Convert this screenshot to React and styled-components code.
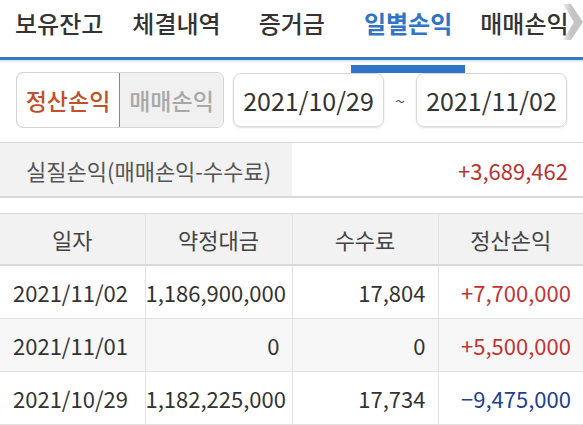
import styled, { createGlobalStyle } from 'styled-components'

const GlobalStyle = createGlobalStyle`
  html, body { margin: 0; padding: 0; background: #fff; }
  body { font-family: "Noto Sans CJK KR", "Noto Sans", sans-serif; color: #333; }
`;

const Page = styled.div`
  width: 583px;
  height: 425px;
  overflow: hidden;
  background: #fff;
`;

const Tabs = styled.div`
  position: relative;
  display: flex;
  height: 57px;
  border-bottom: 3px solid #3a76c0;
  box-shadow: 0 2px 0 #d9eefb;
  padding-left: 15px;
  white-space: nowrap;
`;

const Tab = styled.div`
  position: relative;
  flex: none;
  margin-right: ${p => p.gap}px;
  padding-top: 2px;
  font-size: 24px;
  line-height: 42px;
  font-weight: ${p => (p.active ? 700 : 500)};
  color: ${p => (p.active ? '#2f74c6' : '#333')};
  &::after {
    content: '';
    display: ${p => (p.active ? 'block' : 'none')};
    position: absolute;
    left: -13px;
    right: -13px;
    bottom: -16px;
    height: 8px;
    background: #2f74c6;
  }
`;

const Chevron = styled.svg`
  position: absolute;
  right: 0;
  top: 4px;
`;

const Controls = styled.div`
  display: flex;
  align-items: center;
  padding: 12px 0 0 16px;
  height: 56px;
`;

const Toggle = styled.div`
  display: flex;
  height: 54px;
  border: 1px solid #d4d4d4;
  border-radius: 7px;
  overflow: hidden;
`;

const ToggleItem = styled.div`
  width: ${p => p.w}px;
  display: flex;
  align-items: center;
  justify-content: center;
  font-size: 23px;
  font-weight: 500;
  background: ${p => (p.active ? '#fff' : '#f0f0f0')};
  color: ${p => (p.active ? '#c0522a' : '#a8a8a8')};
  border: ${p => (p.active ? '1px solid #c8704a' : 'none')};
  border-radius: ${p => (p.active ? '7px 0 0 7px' : '0')};
  margin: ${p => (p.active ? '-1px 0 -1px -1px' : '0')};
`;

const DateBox = styled.div`
  width: 149px;
  height: 52px;
  margin-left: ${p => p.ml}px;
  border: 1px solid #d8d8d8;
  border-radius: 8px;
  box-shadow: 0 1px 2px rgba(0, 0, 0, 0.14);
  display: flex;
  align-items: center;
  justify-content: center;
  font-size: 25px;
  color: #333;
`;

const Tilde = styled.span`
  width: 32px;
  text-align: center;
  font-size: 18px;
  color: #666;
`;

const Summary = styled.div`
  display: flex;
  height: 53px;
  margin-top: 14px;
  border-top: 1px solid #d9d9d9;
  border-bottom: 2px solid #d9d9d9;
`;

const SummaryLabel = styled.div`
  width: 266px;
  padding-left: 26px;
  background: #f2f2f2;
  display: flex;
  align-items: center;
  font-size: 22px;
  color: #555;
`;

const SummaryValue = styled.div`
  flex: 1;
  display: flex;
  align-items: center;
  justify-content: flex-end;
  padding-right: 15px;
  font-size: 22px;
  color: #b83232;
`;

const Table = styled.table`
  margin-top: 15px;
  width: 583px;
  border-collapse: collapse;
  table-layout: fixed;
  font-size: 22px;
  border-top: 1px solid #d9d9d9;
`;

const Th = styled.th`
  height: 50px;
  padding: 0;
  background: #f2f2f2;
  font-weight: 400;
  color: #444;
  border-bottom: 2px solid #d9d9d9;
  border-left: 1px solid #e2e2e2;
  &:first-child { border-left: none; }
`;

const Row = styled.tr`
  background: ${p => (p.shade ? '#f7f7f7' : '#fff')};
`;

const Td = styled.td`
  height: 52px;
  padding: 0 ${p => (p.align === 'left' ? 0 : 12)}px 0 ${p => (p.align === 'left' ? 13 : 0)}px;
  text-align: ${p => p.align || 'right'};
  color: ${p => p.color || '#333'};
  border-bottom: 1px solid #e2e2e2;
  border-left: 1px solid #e2e2e2;
  white-space: nowrap;
  &:first-child { border-left: none; }
`;

const tabs = [
  { label: '보유잔고', gap: 29 },
  { label: '체결내역', gap: 38 },
  { label: '증거금', gap: 39 },
  { label: '일별손익', gap: 28, active: true },
  { label: '매매손익', gap: 0 },
];

const rows = [
  { date: '2021/11/02', amount: '1,186,900,000', fee: '17,804', pnl: '+7,700,000', up: true },
  { date: '2021/11/01', amount: '0', fee: '0', pnl: '+5,500,000', up: true },
  { date: '2021/10/29', amount: '1,182,225,000', fee: '17,734', pnl: '−9,475,000', up: false },
];

const App = () => {
  return (
    <Page>
      <GlobalStyle />
      <Tabs>
        {tabs.map(t => (
          <Tab key={t.label} gap={t.gap} active={t.active}>{t.label}</Tab>
        ))}
        <Chevron width="22" height="36" viewBox="0 0 22 36">
          <defs>
            <linearGradient id="chev" x1="0" x2="1" y1="0" y2="0">
              <stop offset="0" stopColor="#c8c8c8" stopOpacity="0.3" />
              <stop offset="0.4" stopColor="#c4c4c4" />
              <stop offset="1" stopColor="#c4c4c4" />
            </linearGradient>
          </defs>
          <path d="M2 0 L10 0 L22 18 L10 36 L2 36 L13 18 Z" fill="url(#chev)" />
        </Chevron>
      </Tabs>
      <Controls>
        <Toggle>
          <ToggleItem w={102} active>정산손익</ToggleItem>
          <ToggleItem w={103}>매매손익</ToggleItem>
        </Toggle>
        <DateBox ml={9}>2021/10/29</DateBox>
        <Tilde>~</Tilde>
        <DateBox ml={0}>2021/11/02</DateBox>
      </Controls>
      <Summary>
        <SummaryLabel>실질손익(매매손익-수수료)</SummaryLabel>
        <SummaryValue>+3,689,462</SummaryValue>
      </Summary>
      <Table>
        <colgroup>
          <col style={{ width: 145 }} />
          <col style={{ width: 147 }} />
          <col style={{ width: 146 }} />
          <col style={{ width: 145 }} />
        </colgroup>
        <thead>
          <tr>
            <Th>일자</Th>
            <Th>약정대금</Th>
            <Th>수수료</Th>
            <Th>정산손익</Th>
          </tr>
        </thead>
        <tbody>
          {rows.map((r, i) => (
            <Row key={r.date} shade={i === 1}>
              <Td align="left">{r.date}</Td>
              <Td>{r.amount}</Td>
              <Td>{r.fee}</Td>
              <Td color={r.up ? '#c03434' : '#1f3f8f'}>{r.pnl}</Td>
            </Row>
          ))}
        </tbody>
      </Table>
    </Page>
  )
}

export default App
